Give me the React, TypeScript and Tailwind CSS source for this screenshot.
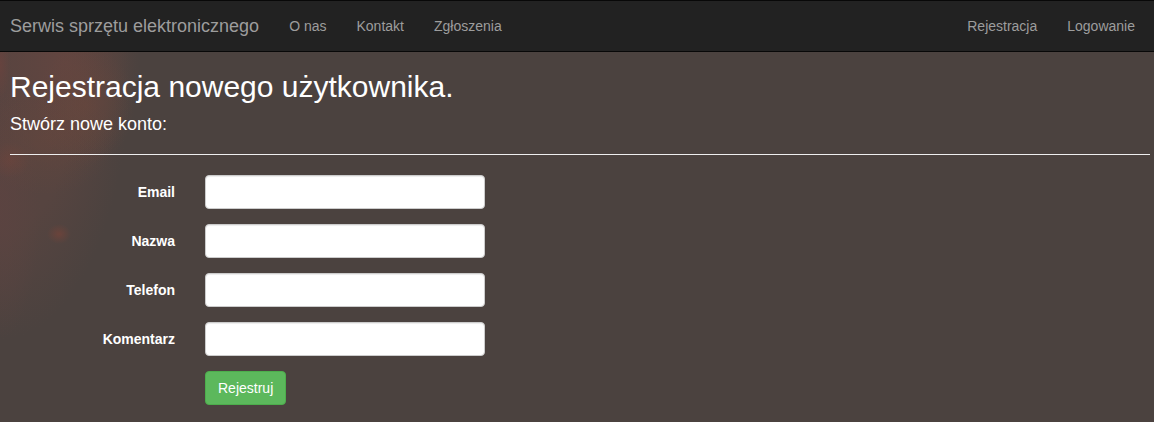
const menu = [
  { label: 'O nas', href: '#about' },
  { label: 'Kontakt', href: '#contact' },
  { label: 'Zgłoszenia', href: '#tickets' },
];

const account = [
  { label: 'Rejestracja', href: '#register' },
  { label: 'Logowanie', href: '#login' },
];

const fields = [
  { id: 'email', label: 'Email', type: 'email' },
  { id: 'name', label: 'Nazwa', type: 'text' },
  { id: 'phone', label: 'Telefon', type: 'tel' },
  { id: 'comment', label: 'Komentarz', type: 'text' },
];

function NavLinks({ items }: { items: { label: string; href: string }[] }) {
  return (
    <ul className="flex">
      {items.map((item) => (
        <li key={item.href}>
          <a href={item.href} className="block px-[15px] py-[15px] text-[#9d9d9d] hover:text-white">
            {item.label}
          </a>
        </li>
      ))}
    </ul>
  );
}

function Navbar() {
  return (
    <nav className="flex flex-wrap justify-between border-y border-[#080808] bg-[#222222] pr-1 pl-[10px]">
      <div className="flex flex-wrap">
        <a href="#home" className="py-[15px] pr-[15px] text-lg leading-5 text-[#9d9d9d] hover:text-white">
          Serwis sprzętu elektronicznego
        </a>
        <NavLinks items={menu} />
      </div>
      <NavLinks items={account} />
    </nav>
  );
}

// Dim reddish nebula glow along the left edge of the page.
const glow =
  'bg-[radial-gradient(ellipse_12px_10px_at_59px_234px,#70433ad0,transparent),radial-gradient(ellipse_50px_60px_at_85px_105px,#6a473c80,transparent),radial-gradient(ellipse_70px_55px_at_45px_140px,#68473c70,transparent),radial-gradient(ellipse_10px_35px_at_0px_65px,#70423d90,transparent),radial-gradient(ellipse_20px_18px_at_10px_160px,#6e433ca0,transparent),radial-gradient(ellipse_40px_130px_at_0px_210px,#5d4341b0,transparent),radial-gradient(ellipse_75px_115px_at_65px_60px,#624540_0%,#5f454080_60%,transparent_100%),radial-gradient(ellipse_130px_270px_at_0px_70px,#584440_0%,#564440_60%,transparent_100%)]';

export default function App() {
  return (
    <div
      className={`min-h-screen bg-[#4b423f] font-['Liberation_Sans',Arial,sans-serif] text-sm leading-5 text-white ${glow}`}
    >
      <Navbar />
      <main className="pt-[18px] pr-1 pb-4 pl-[10px]">
        <h2 className="text-3xl leading-[33px]">Rejestracja nowego użytkownika.</h2>
        <h4 className="mt-[11px] text-lg leading-5">Stwórz nowe konto:</h4>
        <hr className="my-5 border-[#eeeeee]" />
        <form className="flex flex-col gap-[15px]" onSubmit={(event) => event.preventDefault()}>
          {fields.map((field) => (
            <div key={field.id} className="flex gap-[30px]">
              <label htmlFor={field.id} className="w-[165px] pt-[7px] text-right font-bold">
                {field.label}
              </label>
              <input
                id={field.id}
                name={field.id}
                type={field.type}
                className="h-[34px] w-[280px] rounded-sm border border-[#cccccc] bg-white px-3 text-[#555555] shadow-[inset_0_1px_1px_rgba(0,0,0,0.075)] outline-none focus:border-[#66afe9]"
              />
            </div>
          ))}
          <div className="pl-[195px]">
            <button
              type="submit"
              className="rounded-sm border border-[#4cae4c] bg-[#5cb85c] px-3 py-[6px] text-white hover:bg-[#449d44]"
            >
              Rejestruj
            </button>
          </div>
        </form>
      </main>
    </div>
  );
}
